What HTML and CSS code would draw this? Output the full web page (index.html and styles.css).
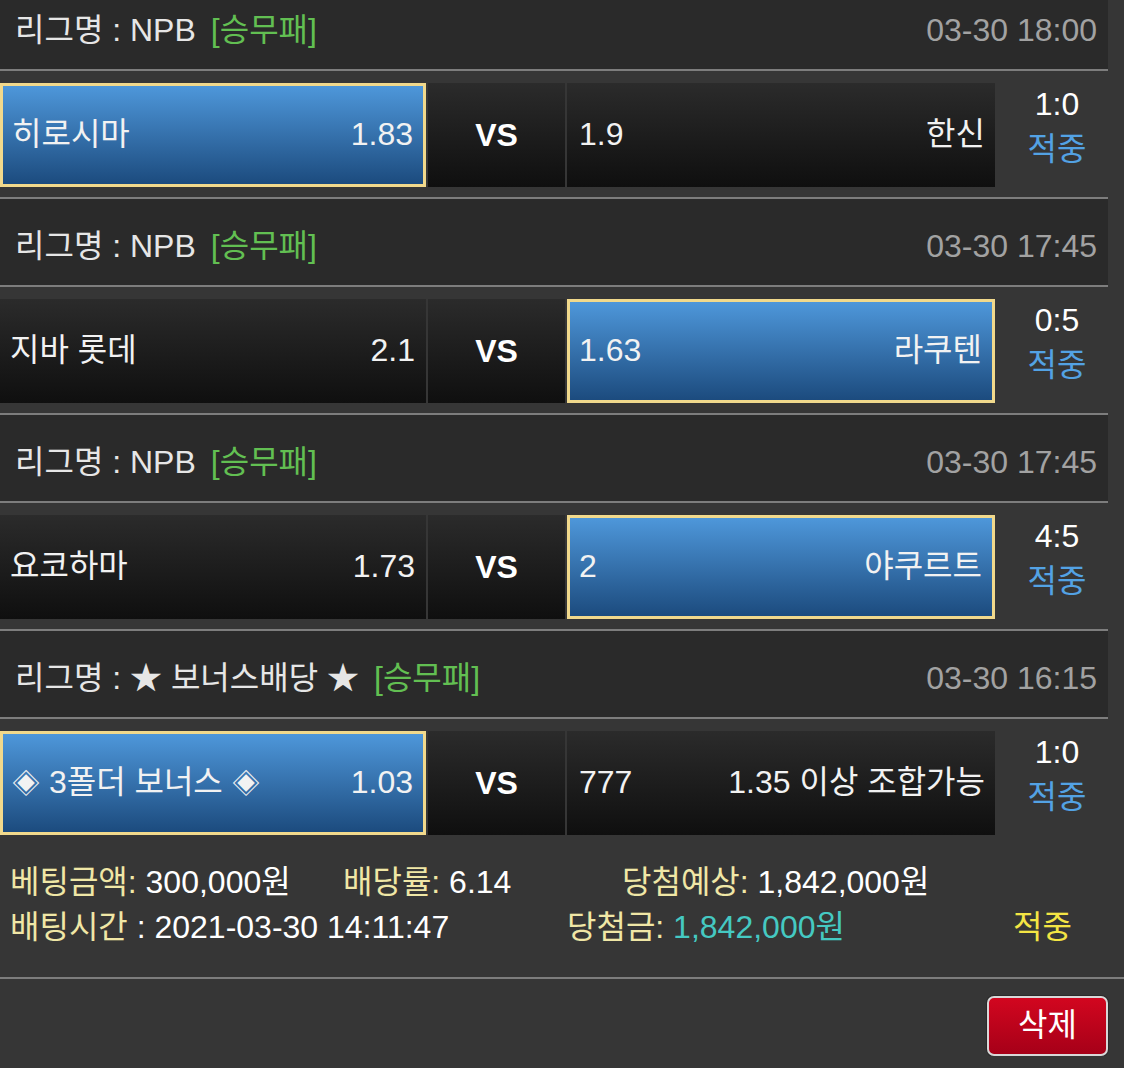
FILE: index.html
```html
<!DOCTYPE html>
<html lang="ko">
<head>
<meta charset="utf-8">
<title>Bet history</title>
<link rel="stylesheet" href="styles.css">
</head>
<body>
<div class="wrap">
  <div class="league">
    <div class="lname">리그명 : NPB<span class="type">[승무패]</span></div>
    <div class="date">03-30 18:00</div>
  </div>
  <div class="sep"></div>
  <div class="match">
    <div class="team home sel"><span>히로시마</span><span>1.83</span></div>
    <div class="vs">VS</div>
    <div class="team away"><span>1.9</span><span>한신</span></div>
    <div class="score"><span>1:0</span><span class="hit">적중</span></div>
  </div>
  <div class="sep"></div>

  <div class="league">
    <div class="lname">리그명 : NPB<span class="type">[승무패]</span></div>
    <div class="date">03-30 17:45</div>
  </div>
  <div class="sep"></div>
  <div class="match">
    <div class="team home"><span>지바 롯데</span><span>2.1</span></div>
    <div class="vs">VS</div>
    <div class="team away sel"><span>1.63</span><span>라쿠텐</span></div>
    <div class="score"><span>0:5</span><span class="hit">적중</span></div>
  </div>
  <div class="sep"></div>

  <div class="league">
    <div class="lname">리그명 : NPB<span class="type">[승무패]</span></div>
    <div class="date">03-30 17:45</div>
  </div>
  <div class="sep"></div>
  <div class="match">
    <div class="team home"><span>요코하마</span><span>1.73</span></div>
    <div class="vs">VS</div>
    <div class="team away sel"><span>2</span><span>야쿠르트</span></div>
    <div class="score"><span>4:5</span><span class="hit">적중</span></div>
  </div>
  <div class="sep"></div>

  <div class="league">
    <div class="lname">리그명 : ★ 보너스배당 ★<span class="type">[승무패]</span></div>
    <div class="date">03-30 16:15</div>
  </div>
  <div class="sep"></div>
  <div class="match">
    <div class="team home sel"><span><span class="dia">◈</span> 3폴더 보너스 <span class="dia">◈</span></span><span>1.03</span></div>
    <div class="vs">VS</div>
    <div class="team away"><span>777</span><span>1.35 이상 조합가능</span></div>
    <div class="score"><span>1:0</span><span class="hit">적중</span></div>
  </div>
</div>

<div class="summary">
  <div class="sum-row">
    <div class="c1"><span class="lbl">베팅금액:</span> 300,000원</div>
    <div class="c2"><span class="lbl">배당률:</span> 6.14</div>
    <div><span class="lbl">당첨예상:</span> 1,842,000원</div>
  </div>
  <div class="sum-row">
    <div class="d1"><span class="lbl">배팅시간</span> : 2021-03-30 14:11:47</div>
    <div class="d2"><span class="lbl">당첨금:</span> <span class="win">1,842,000원</span></div>
    <div><span class="status">적중</span></div>
  </div>
</div>
<div class="sep full"></div>
<div class="actions">
  <button class="del">삭제</button>
</div>
</body>
</html>
```

FILE: styles.css
```css
html, body {
  margin: 0;
  padding: 0;
  background: #363636;
  color: #ffffff;
  font-family: "Liberation Sans", "Noto Sans CJK KR", sans-serif;
  font-size: 32px;
  overflow: hidden;
}

.wrap {
  width: 1108px;
  margin-top: -17px;
}

.league {
  height: 86px;
  background: #2a2a2a;
  display: flex;
  align-items: center;
  justify-content: space-between;
  padding: 8px 11px 0 15px;
  box-sizing: border-box;
  line-height: 40px;
  color: #e6e6e6;
}

.type {
  color: #62bf52;
  margin-left: 15px;
}

.date {
  color: #a2a2a2;
}

.sep {
  height: 2px;
  background: #7d7d7d;
}

.match {
  display: flex;
  padding: 12px 0 10px;
  height: 104px;
}

.team {
  box-sizing: border-box;
  height: 104px;
  display: flex;
  align-items: center;
  justify-content: space-between;
  padding: 0 11px 3px 10px;
  line-height: 40px;
  background: linear-gradient(#2b2b2b, #0f0f0f);
  color: #f2f2f2;
}

.home {
  width: 426px;
}

.away {
  width: 428px;
  margin-left: 2px;
  padding: 0 10px 3px 12px;
}

.team.sel {
  border: 3px solid #f1d98c;
  background: linear-gradient(#4e97da, #1c4b7e);
  padding: 0 10px 3px 9px;
}

.dia {
  font-family: "Noto Sans CJK KR", sans-serif;
  font-size: 28px;
}

.vs {
  width: 137px;
  margin-left: 2px;
  height: 104px;
  display: flex;
  align-items: center;
  justify-content: center;
  font-weight: bold;
  line-height: 40px;
  background: linear-gradient(#2b2b2b, #0f0f0f);
}

.score {
  width: 113px;
  box-sizing: border-box;
  padding-left: 11px;
  display: flex;
  flex-direction: column;
  align-items: center;
  line-height: 45px;
  margin-top: -1px;
}

.hit {
  color: #53a2e4;
}

.summary {
  padding: 15px 0 27px;
  line-height: 45px;
}

.sum-row {
  display: flex;
  padding-left: 10px;
  white-space: nowrap;
}

.c1 { width: 333px; }
.c2 { width: 279px; }
.d1 { width: 557px; }
.d2 { width: 446px; }

.lbl {
  color: #f0e7a6;
}

.win {
  color: #45c9c2;
}

.status {
  color: #f4e544;
}

.sep.full {
  width: 100%;
}

.actions {
  display: flex;
  justify-content: flex-end;
  padding: 17px 16px 0 0;
}

.del {
  width: 121px;
  height: 60px;
  box-sizing: border-box;
  border: 2px solid #d8d8d8;
  border-radius: 7px;
  background: linear-gradient(#d2061f, #a60018);
  color: #ffffff;
  font-family: "Liberation Sans", "Noto Sans CJK KR", sans-serif;
  font-size: 32px;
  line-height: 40px;
  display: flex;
  align-items: center;
  justify-content: center;
  padding: 0 0 2px;
  box-shadow: 0 0 0 1px #2a2a2a;
}
```
